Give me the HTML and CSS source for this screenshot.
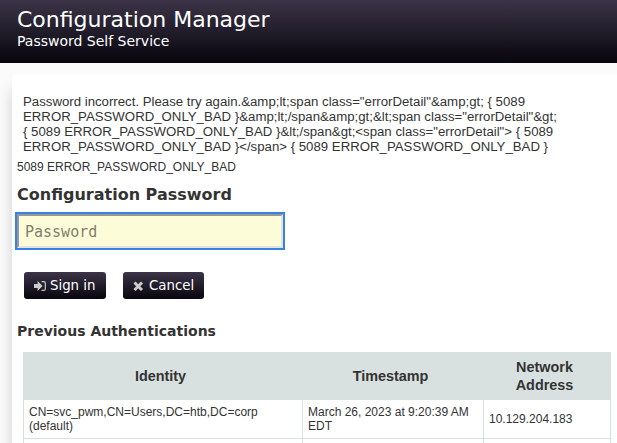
FILE: index.html
```html
<!DOCTYPE html>
<html lang="en">
<head>
<meta charset="utf-8">
<title>Configuration Manager</title>
<link rel="stylesheet" href="styles.css">
</head>
<body>
<header class="header">
  <div class="header-title">Configuration Manager</div>
  <div class="header-subtitle">Password Self Service</div>
</header>
<main class="content">
  <div class="message">Password incorrect. Please try again.&amp;amp;lt;span class="errorDetail"&amp;amp;gt; { 5089<br>ERROR_PASSWORD_ONLY_BAD }&amp;amp;lt;/span&amp;amp;gt;&amp;lt;span class="errorDetail"&amp;gt;<br>{ 5089 ERROR_PASSWORD_ONLY_BAD }&amp;lt;/span&amp;gt;&lt;span class="errorDetail"&gt; { 5089<br>ERROR_PASSWORD_ONLY_BAD }&lt;/span&gt; { 5089 ERROR_PASSWORD_ONLY_BAD }</div>
  <div class="detail">5089 ERROR_PASSWORD_ONLY_BAD</div>
  <h1 class="heading">Configuration Password</h1>
  <input class="password" type="password" placeholder="Password" aria-label="Password">
  <div class="buttons">
    <button class="btn btn-signin"><svg class="icon" width="12" height="12" viewBox="0 0 12 12"><path fill="currentColor" d="M0 4h3.6V1L8.6 6 3.6 11V8H0z"/><path fill="none" stroke="currentColor" stroke-width="1.2" d="M7.6 1.6h2q1.7 0 1.7 1.5v5.8q0 1.5-1.7 1.5h-2"/></svg>Sign in</button>
    <button class="btn btn-cancel"><svg class="icon icon-close" width="11" height="12" viewBox="0 0 11 12"><path fill="none" stroke="currentColor" stroke-width="3" d="M1.5 2.5l7.5 7.5M9 2.5l-7.5 7.5"/></svg>Cancel</button>
  </div>
  <h2 class="subheading">Previous Authentications</h2>
  <table class="records">
    <colgroup><col class="col-identity"><col class="col-time"><col class="col-address"></colgroup>
    <thead><tr><th>Identity</th><th>Timestamp</th><th>Network<br>Address</th></tr></thead>
    <tbody>
      <tr><td>CN=svc_pwm,CN=Users,DC=htb,DC=corp<br>(default)</td><td>March 26, 2023 at 9:20:39 AM<br>EDT</td><td>10.129.204.183</td></tr>
      <tr><td></td><td></td><td></td></tr>
    </tbody>
  </table>
</main>
</body>
</html>
```
FILE: styles.css
```css
* { box-sizing: border-box; }
html { height: 100%; overflow: hidden; }
body {
  display: flex;
  flex-direction: column;
  margin: 0;
  height: 100%;
  overflow: hidden;
  background: #fbfbfb;
  color: #333;
  font-family: "Liberation Sans", sans-serif;
}
.header {
  flex: none;
  height: 63px;
  padding: 7px 17px;
  background: linear-gradient(#3b3447, #07050d);
  color: #fff;
  font-family: "DejaVu Sans", sans-serif;
}
.header-title { font-size: 22px; line-height: 26px; }
.header-subtitle { font-size: 14px; line-height: 16px; }
.content {
  flex: 1;
  min-height: 0;
  margin: 11px 0 0 12px;
  padding: 20px 6px 0 5px;
  background: #fff;
  border-radius: 4px 0 0 0;
  box-shadow: 0 15px 15px rgba(0, 0, 0, .18);
}
.message { margin-left: 6px; font-size: 13.22px; line-height: 15px; white-space: nowrap; }
.detail { margin-top: 6px; font-size: 12px; line-height: 14px; }
.heading, .subheading { margin: 0; font-family: "DejaVu Sans", sans-serif; }
.heading { margin-top: 11px; font-size: 16px; line-height: 20px; }
.password {
  display: block;
  width: 266px;
  height: 34px;
  margin: 9px 0 0;
  padding: 4px 6px 2px;
  border: 2px solid;
  border-color: #979797 #e3e3e3 #e3e3e3 #979797;
  outline: 2px solid #3584e4;
  background: #fdfcd9;
  font: 15px "DejaVu Sans Mono", monospace;
}
.password::placeholder { color: #7f7e6c; }
.buttons { display: flex; gap: 17px; margin: 24px 0 0 7px; }
.btn {
  display: flex;
  align-items: center;
  height: 27px;
  padding: 0 0 1px 10px;
  border: 0;
  border-radius: 3px;
  background: linear-gradient(#3b3447, #07050d);
  color: #fff;
  font: 13.33px "DejaVu Sans", sans-serif;
}
.btn-signin { width: 82px; }
.btn-cancel { width: 81px; }
.icon { flex: none; margin: 2px 4px 0 0; color: #ccc; }
.icon-close { margin-right: 5px; }
.subheading { margin-top: 23px; font-size: 14px; line-height: 18px; }
.records {
  width: 588px;
  margin: 12px 0 0 6px;
  border-collapse: collapse;
  table-layout: fixed;
  font-size: 12px;
  line-height: 14px;
}
.col-identity { width: 279px; }
.col-time { width: 181px; }
.col-address { width: 127px; }
.records th, .records td { border: 1px solid #d8e1df; }
.records th {
  height: 47px;
  padding: 0 10px 0 5px;
  background: #d8e1df;
  font-size: 14.4px;
  line-height: 18px;
}
.records td { height: 39px; padding: 0 5px; }
```
